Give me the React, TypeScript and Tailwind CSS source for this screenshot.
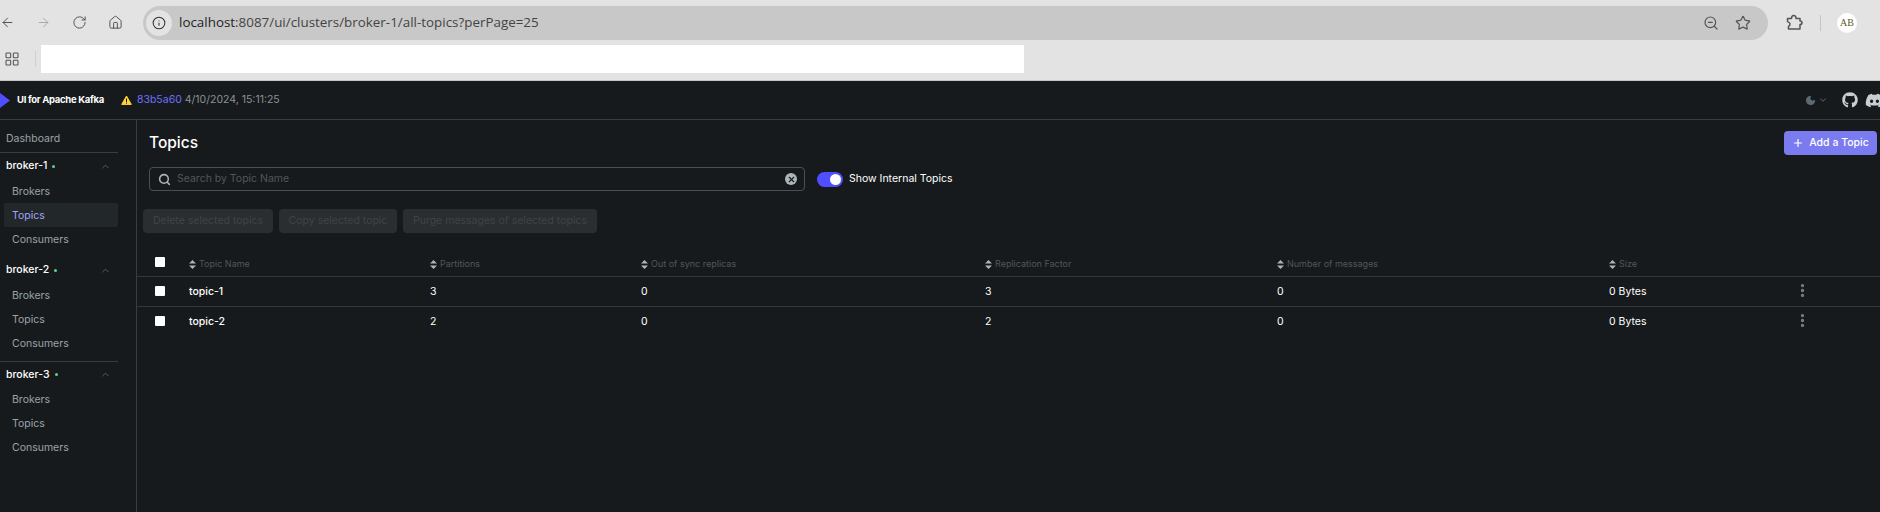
import { ArrowLeft, ArrowRight, ChevronDown, ChevronUp, Home, Info, LayoutGrid, MoreVertical, Moon, Plus, RotateCw, Search, Star, X, ZoomOut } from "lucide-react";
import { FaDiscord, FaGithub } from "react-icons/fa";

const clusters = [
  { name: "broker-1", active: true },
  { name: "broker-2", active: false },
  { name: "broker-3", active: false },
];

const columns = ["Topic Name", "Partitions", "Out of sync replicas", "Replication Factor", "Number of messages", "Size"];

const topics = [
  { name: "topic-1", partitions: 3 },
  { name: "topic-2", partitions: 2 },
];

const gridCols = "grid grid-cols-[52px_241px_211px_344px_292px_332px_185px_1fr]";

function SortIcon() {
  return (
    <svg width="7" height="9" viewBox="0 0 7 9" className="mr-[3px] shrink-0">
      <path d="M3.5 0 7 3.6H0zM3.5 9 0 5.4h7z" fill="#ABB5BA" />
    </svg>
  );
}

function Checkbox({ lift }: { lift: string }) {
  return <div className={`ml-[18px] h-[10px] w-[10px] rounded-[1px] bg-white ${lift}`} />;
}

function ExtensionIcon() {
  return (
    <svg width="17" height="17" viewBox="0 0 17 17" fill="none" stroke="#555" strokeWidth="1.5" strokeLinejoin="round" className="ml-[18px] shrink-0">
      <path d="M1.5 4.5H5.5C5.5 2.8 6.4 1.5 7.8 1.5S10 2.8 10 4.5H14V7C15.4 7 16 7.8 16 8.8S15.4 10.6 14 10.6V15H2.5V12.4C3.8 11.8 4 11 4 9.8S3 8 1.5 7.6Z" />
    </svg>
  );
}

function BrowserChrome() {
  return (
    <div className="h-[81px] shrink-0 border-b border-[#c4c4c4] bg-[#e3e3e3] font-['Open_Sans',sans-serif]">
      <div className="flex h-[45px] items-center">
        <ArrowLeft size={15} strokeWidth={1.6} className="text-[#555]" />
        <ArrowRight size={15} strokeWidth={1.6} className="ml-[21px] text-[#aaa]" />
        <RotateCw size={15} strokeWidth={1.6} className="ml-[21px] text-[#555]" />
        <Home size={15} strokeWidth={1.6} className="ml-[21px] text-[#555]" />
        <div className="ml-[20px] flex h-[34px] w-[1625px] items-center rounded-full bg-[#c8c8c8] pr-[17px] text-[13.4px] text-[#444]">
          <div className="ml-[3px] flex h-[26px] w-[26px] items-center justify-center rounded-full bg-[#e3e3e3]">
            <Info size={14} strokeWidth={1.8} className="text-[#333]" />
          </div>
          <span className="ml-[7px] text-[#1f1f1f]">localhost</span>
          <span>:8087/ui/clusters/broker-1/all-topics?perPage=25</span>
          <ZoomOut size={16} strokeWidth={1.8} className="ml-auto text-[#555]" />
          <Star size={16} strokeWidth={1.8} className="ml-[16px] text-[#555]" />
        </div>
        <ExtensionIcon />
        <div className="ml-[17px] h-[16px] w-px bg-[#c4c4c4]" />
        <div className="ml-[16px] flex h-[20px] w-[20px] items-center justify-center rounded-full bg-white font-['Liberation_Serif',serif] text-[10px] text-[#5b5b24]">
          AB
        </div>
      </div>
      <div className="flex h-[28px] items-center">
        <LayoutGrid size={16} strokeWidth={1.6} className="ml-[4px] text-[#555]" />
        <div className="ml-[15px] h-[16px] w-px bg-[#cfcfcf]" />
        <div className="ml-[5px] h-[28px] w-[983px] bg-white" />
      </div>
    </div>
  );
}

function Sidebar() {
  return (
    <aside className="w-[137px] shrink-0 border-r border-[#3a3d40] text-[10.5px]">
      <div className="flex h-[33px] w-[118px] items-center border-b border-[#3a3d40] pl-[6px] pt-[5px] text-[#9aa3a8]">
        Dashboard
      </div>
      {clusters.map((cluster) => (
        <div key={cluster.name} className="pb-[6px]">
          <div
            className={`flex h-[26px] w-[118px] items-center pl-[6px] font-medium text-white ${cluster.name === "broker-3" ? "border-t border-[#3a3d40]" : ""}`}
          >
            {cluster.name}
            <span className="ml-[5px] h-[3px] w-[3px] rounded-full bg-[#5CD685]" />
            <ChevronUp size={11} className="ml-auto mr-[7px] text-[#5b6266]" />
          </div>
          {["Brokers", "Topics", "Consumers"].map((item) => (
            <div
              key={item}
              className={`ml-[4px] flex h-[24px] w-[114px] items-center rounded-[2px] pl-[8px] pt-[1px] ${cluster.active && item === "Topics" ? "bg-[#22282A] text-[#A3A3F5]" : "text-[#9aa3a8]"}`}
            >
              {item}
            </div>
          ))}
        </div>
      ))}
    </aside>
  );
}

function TopicsPage() {
  return (
    <main className="min-w-0 flex-1">
      <div className="flex h-[47px] items-center justify-between pb-[1px] pl-[12px] pr-[3px]">
        <h1 className="text-[15.5px] font-medium text-white">Topics</h1>
        <button className="flex h-[24px] w-[93px] items-center justify-center gap-[5px] rounded-[4px] bg-[#7B7BF0] text-[10.5px] font-medium text-white">
          <Plus size={12} strokeWidth={2.4} />
          Add a Topic
        </button>
      </div>
      <div className="flex items-center pl-[12px]">
        <div className="flex h-[24px] w-[656px] items-center rounded-[4px] border border-[#4a4f52] pl-[8px] pr-[7px]">
          <Search size={13} strokeWidth={2.8} className="text-[#ABB5BA]" />
          <span className="ml-[6px] text-[10.5px] text-[#50575a]">Search by Topic Name</span>
          <div className="ml-auto flex h-[12px] w-[12px] items-center justify-center rounded-full bg-[#ABB5BA]">
            <X size={9} strokeWidth={3} className="text-[#171A1C]" />
          </div>
        </div>
        <div className="ml-[12px] flex h-[15px] w-[26px] items-center justify-end rounded-full bg-[#4F4FFF] pr-[2px]">
          <div className="h-[11px] w-[11px] rounded-full bg-white" />
        </div>
        <span className="ml-[6px] text-[10.5px] text-white">Show Internal Topics</span>
      </div>
      <div className="mt-[18px] flex gap-[6px] pl-[6px] text-[10.5px] text-[#3f4447]">
        <button className="h-[24px] w-[130px] rounded-[4px] bg-[#2A2E31]">Delete selected topics</button>
        <button className="h-[24px] w-[118px] rounded-[4px] bg-[#2A2E31]">Copy selected topic</button>
        <button className="h-[24px] w-[194px] rounded-[4px] bg-[#2A2E31]">Purge messages of selected topics</button>
      </div>
      <div className={`${gridCols} mt-[22px] h-[22px] items-center border-b border-[#33373a] pb-[3px] text-[9px] text-[#50575a]`}>
        <Checkbox lift="mb-[4px]" />
        {columns.map((column) => (
          <div key={column} className="flex items-center">
            <SortIcon />
            {column}
          </div>
        ))}
      </div>
      {topics.map((topic) => (
        <div key={topic.name} className={`${gridCols} h-[30px] items-center border-b border-[#33373a] text-[10.5px] text-white last:border-b-0`}>
          <Checkbox lift="mb-[2px]" />
          <div className="font-medium">{topic.name}</div>
          <div>{topic.partitions}</div>
          <div>0</div>
          <div>{topic.partitions}</div>
          <div>0</div>
          <div>0 Bytes</div>
          <MoreVertical size={17} strokeWidth={2.6} className="mb-[3px] text-[#7a8387]" />
        </div>
      ))}
    </main>
  );
}

export default function App() {
  return (
    <div className="flex h-[512px] w-[1880px] flex-col overflow-hidden bg-[#171A1C] font-['Inter',sans-serif]">
      <BrowserChrome />
      <header className="flex h-[39px] shrink-0 items-center border-b border-[#3a3d40]">
        <svg width="10" height="15" viewBox="0 0 10 15" className="shrink-0">
          <path d="M0 0 10 7.5 0 15z" fill="#4F4FFF" />
        </svg>
        <span className="ml-[7px] text-[9.5px] font-bold tracking-[-0.3px] text-white">UI for Apache Kafka</span>
        <svg width="11" height="10" viewBox="0 0 11 10" className="ml-[17px]">
          <path d="M5.5 1 10.3 9.4H0.7z" fill="#FFD43B" stroke="#FFD43B" strokeLinejoin="round" />
          <rect x="5" y="3.5" width="1" height="3.5" fill="#171A1C" />
          <rect x="5" y="7.7" width="1" height="1" fill="#171A1C" />
        </svg>
        <span className="ml-[5px] text-[10.5px] text-[#6E6EFF]">83b5a60</span>
        <span className="ml-[3px] text-[10.5px] text-[#8a9296]">4/10/2024, 15:11:25</span>
        <Moon size={11} fill="#5b6a75" className="ml-auto text-[#5b6a75]" />
        <ChevronDown size={10} strokeWidth={2.4} className="ml-[2px] text-[#5b6a75]" />
        <FaGithub size={16} className="ml-[14px] text-[#c8ced1]" />
        <div className="ml-[7px] h-[16px] w-[15px] overflow-hidden">
          <FaDiscord size={19} className="-mt-[1px] text-[#c8ced1]" />
        </div>
      </header>
      <div className="flex flex-1">
        <Sidebar />
        <TopicsPage />
      </div>
    </div>
  );
}
